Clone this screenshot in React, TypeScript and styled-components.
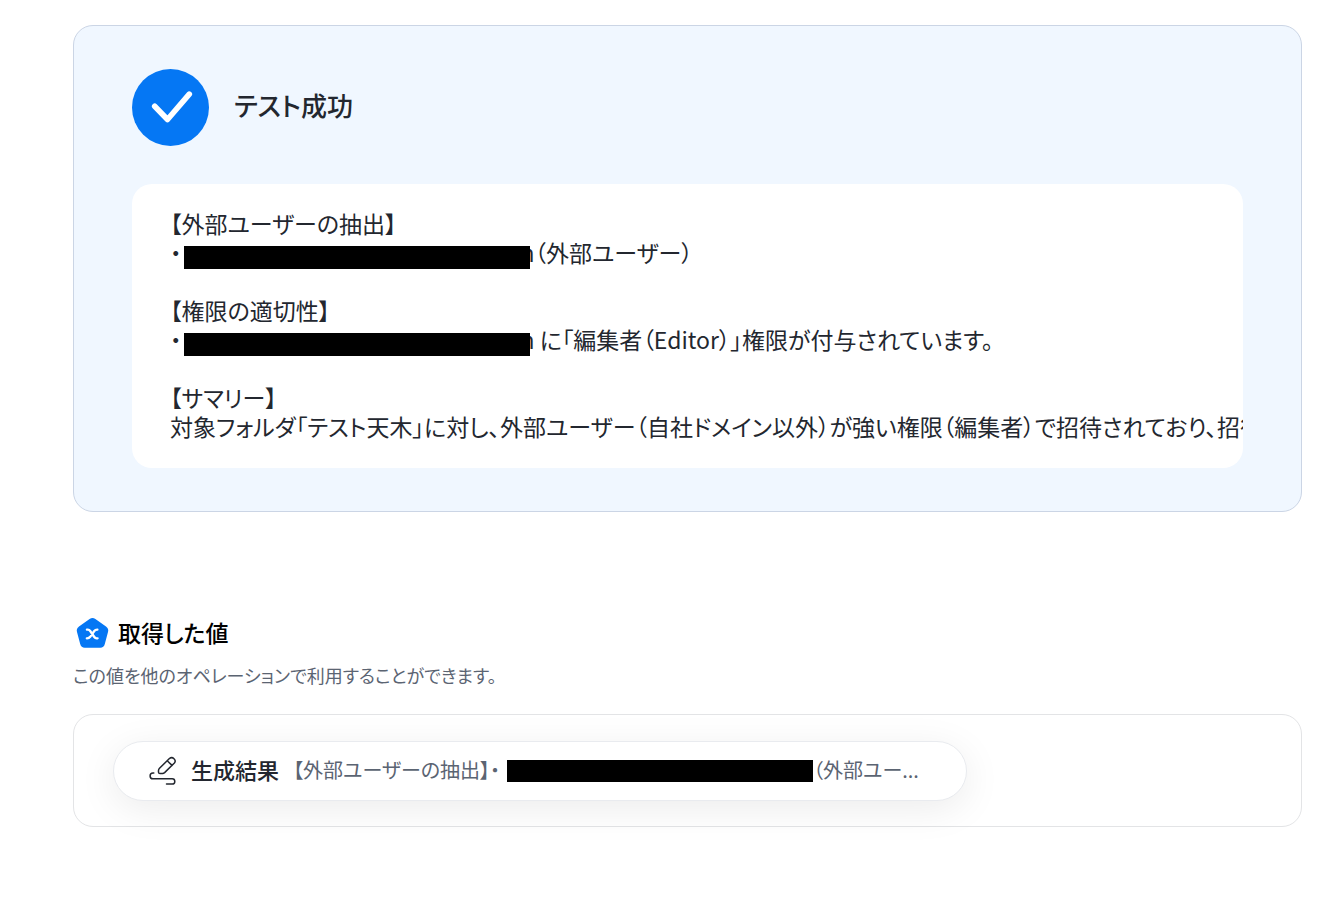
import React from "react";
import styled, { createGlobalStyle } from "styled-components";

const GlobalStyle = createGlobalStyle`
  *, *::before, *::after { box-sizing: border-box; }
  body {
    margin: 0;
    background: #fff;
    color: #23272f;
    font-family: "Noto Sans CJK JP", sans-serif;
    font-feature-settings: "palt";
  }
  h2, p { margin: 0; }
`;

const Page = styled.main`
  padding: 25px 38px 40px 73px;
`;

const ResultCard = styled.section`
  padding: 43px 58px;
  border: 1px solid #cbd5e5;
  border-radius: 20px;
  background: #f0f7ff;
`;

const ResultHeader = styled.header`
  display: flex;
  align-items: center;
  gap: 25px;
  margin-bottom: 38px;
`;

const ResultTitle = styled.h2`
  padding-bottom: 6px;
  font-size: 26px;
  line-height: 38px;
  font-weight: 500;
`;

const Output = styled.div`
  padding: 25px 38px 27px;
  border-radius: 20px;
  background: #fff;
  overflow: hidden;
  white-space: pre;
  font-size: 23px;
  line-height: 29px;
`;

const OutputLine = styled.p`
  height: 29px;
`;

const Redacted = styled.span<{ $width: number }>`
  display: inline-block;
  position: relative;
  width: ${(p) => p.$width}px;
  height: 23px;
  background: #000;
  vertical-align: -7px;
`;

const MaskedAddress = styled.span`
  ${Redacted} {
    margin: 0 -9px 0 2px;
  }
`;

const Values = styled.section`
  margin-top: 102px;
`;

const ValuesHeader = styled.header`
  display: flex;
  align-items: center;
  gap: 8px;
  padding-left: 2px;
`;

const ValuesTitle = styled.h2`
  padding-bottom: 2px;
  color: #000;
  font-size: 23px;
  line-height: 36px;
  font-weight: 500;
`;

const Description = styled.p`
  margin-top: 10px;
  color: #5b6472;
  font-size: 18px;
  line-height: 26px;
`;

const ValuePanel = styled.div`
  display: flex;
  margin-top: 26px;
  padding: 26px 39px 25px;
  border: 1px solid #e3e4e6;
  border-radius: 20px;
`;

const ValuePill = styled.div`
  display: flex;
  align-items: center;
  width: 854px;
  max-width: 100%;
  height: 60px;
  padding: 0 34px;
  border: 1px solid #e9ebef;
  border-radius: 30px;
  background: #fff;
  box-shadow: 0 8px 38px rgba(0, 0, 0, 0.08);
  white-space: nowrap;
`;

const ValueName = styled.strong`
  margin: 0 14px;
  padding-bottom: 4px;
  font-size: 22px;
  line-height: 34px;
  font-weight: 500;
`;

const ValuePreview = styled.span`
  padding-bottom: 2px;
  color: #5b6472;
  font-size: 20px;
  line-height: 30px;

  ${Redacted} {
    height: 22px;
    margin-left: 7px;
    vertical-align: -4px;
  }
`;

function CheckIcon() {
  return (
    <svg width="77" height="77" viewBox="0 0 77 77" aria-hidden="true">
      <circle cx="38.5" cy="38.5" r="38.5" fill="#0577f4" />
      <path d="M22.7 37.2 35.5 50.5 57.3 25.2" fill="none" stroke="#fff" strokeWidth="5.6" strokeLinecap="round" strokeLinejoin="round" />
    </svg>
  );
}

function ValueIcon() {
  return (
    <svg width="35" height="34" viewBox="0 0 35 34" aria-hidden="true">
      <path d="M14.6 3.1Q17.5 1 20.4 3.1L31 10.4Q34 12.6 33 16L29.8 28Q28.8 31.8 25.3 31.8H9.7Q6.2 31.8 5.2 28L2 16Q1 12.6 4 10.4Z" fill="#0577f4" />
      <path d="M11.9 13.7H12.9Q14.3 13.7 15.2 15L19.3 21Q20.2 22.3 21.6 22.3H22.6M22.4 13.6Q20.4 13.5 19.3 15L15.2 20.8Q14 22.4 11.8 22.3" fill="none" stroke="#fff" strokeWidth="2.3" strokeLinecap="round" />
    </svg>
  );
}

function GenerateIcon() {
  return (
    <svg width="29" height="30" viewBox="0 0 29 30" fill="none" stroke="#23272f" strokeWidth="1.5" strokeLinecap="round" strokeLinejoin="round" aria-hidden="true">
      <path d="M11.5 12.3 21.4 2.5Q23.8 0.6 26 2.7T26.4 7L16.6 16.6Q15.6 17.4 14.5 17.5L12 17.6Q10.6 17.6 10.5 16.3V14.5Q10.6 13.2 11.5 12.3ZM19.2 4.8 24.1 9.4" />
      <path d="M5.8 17H5A2.9 2.9 0 0 0 5 22.8H24.2A2.6 2.6 0 0 1 24.2 28H18.5" />
    </svg>
  );
}

function Address() {
  return (
    <MaskedAddress>
      <Redacted $width={346} />n
    </MaskedAddress>
  );
}

export default function App() {
  return (
    <>
      <GlobalStyle />
      <Page>
        <ResultCard>
          <ResultHeader>
            <CheckIcon />
            <ResultTitle>テスト成功</ResultTitle>
          </ResultHeader>
          <Output>
            <OutputLine>【外部ユーザーの抽出】</OutputLine>
            <OutputLine>・<Address />（外部ユーザー）</OutputLine>
            <OutputLine />
            <OutputLine>【権限の適切性】</OutputLine>
            <OutputLine>・<Address /> に「編集者（Editor）」権限が付与されています。</OutputLine>
            <OutputLine />
            <OutputLine>【サマリー】</OutputLine>
            <OutputLine>対象フォルダ「テスト天木」に対し、外部ユーザー（自社ドメイン以外）が強い権限（編集者）で招待されており、招待</OutputLine>
          </Output>
        </ResultCard>

        <Values>
          <ValuesHeader>
            <ValueIcon />
            <ValuesTitle>取得した値</ValuesTitle>
          </ValuesHeader>
          <Description>この値を他のオペレーションで利用することができます。</Description>
          <ValuePanel>
            <ValuePill>
              <GenerateIcon />
              <ValueName>生成結果</ValueName>
              <ValuePreview>
                【外部ユーザーの抽出】・<Redacted $width={306} />（外部ユー...
              </ValuePreview>
            </ValuePill>
          </ValuePanel>
        </Values>
      </Page>
    </>
  );
}
